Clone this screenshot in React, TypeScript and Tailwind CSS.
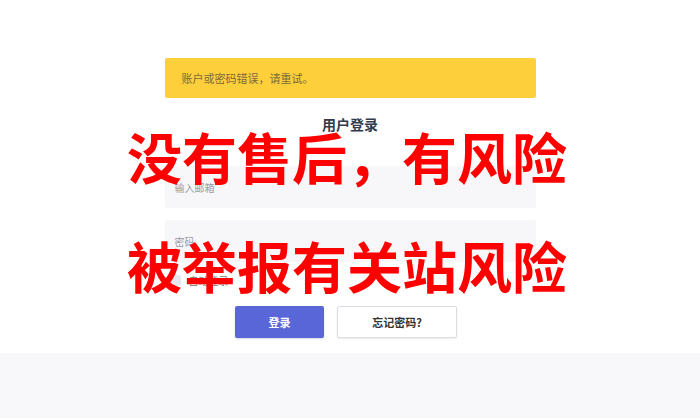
import React from 'react';

const font = '"Noto Sans CJK SC", "Liberation Sans", sans-serif';

export default function App() {
  return (
    <div className="relative w-[700px] h-[418px] bg-white overflow-hidden" style={{ fontFamily: font }}>
      {/* Login card */}
      <div className="h-[353px] flex flex-col items-center pt-[58px]">
        <div className="w-[371px] flex flex-col">
          <div className="h-[40px] bg-[#fdd03b] rounded-[2px] flex items-center px-[17px] text-[11px] text-[#7a6a3c]">
            账户或密码错误，请重试。
          </div>
          <h2 className="mt-[16px] text-center text-[14px] font-bold text-[#333a4d] leading-[20px]">用户登录</h2>
          <div className="mt-[32px] h-[42px] bg-[#f7f7f9] rounded-[2px] flex items-center px-[10px] text-[10px] text-[#9a9aa3]">
            输入邮箱
          </div>
          <div className="mt-[12px] h-[42px] bg-[#f7f7f9] rounded-[2px] flex items-center px-[10px] text-[10px] text-[#9a9aa3]">
            密码
          </div>
          <label className="mt-[11px] flex items-center gap-[8px] pl-[5px] text-[10px] text-[#777] h-[14px]">
            <span className="w-[11px] h-[11px] bg-[#e6e8ee] rounded-[2px]" />
            自动登录
          </label>
          <div className="mt-[19px] flex justify-center gap-[13px] pr-[8px]">
            <button className="w-[89px] h-[32px] bg-[#5966d8] rounded-[2px] text-white text-[11px] font-bold shadow-[0_1px_2px_rgba(0,0,0,0.15)]">
              登录
            </button>
            <button className="w-[120px] h-[32px] bg-white border border-[#dcdde2] rounded-[2px] text-[#333] text-[11px] font-bold shadow-[0_1px_2px_rgba(0,0,0,0.08)]">
              忘记密码?
            </button>
          </div>
        </div>
      </div>
      {/* Footer band */}
      <div className="h-[65px] bg-[#f8f8fb]" />

      {/* Red overlay text */}
      <div className="absolute left-[127px] top-[123px] flex flex-col text-[#ff0000] font-bold text-[55px] leading-[64px] pointer-events-none whitespace-nowrap">
        <span>没有售后，有风险</span>
        <span className="mt-[45px]">被举报有关站风险</span>
      </div>
    </div>
  );
}
